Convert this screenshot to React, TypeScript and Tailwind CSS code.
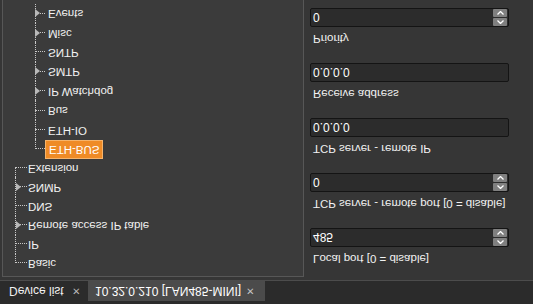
import React from 'react';

type Line = 'first' | 'mid' | 'last' | 'none';

type Node = {
  label: string;
  level: 0 | 1;
  arrow?: boolean;
  selected?: boolean;
  l0: Line;
  l1: Line;
};

const nodes: Node[] = [
  { label: 'Basic', level: 0, l0: 'first', l1: 'none' },
  { label: 'IP', level: 0, l0: 'mid', l1: 'none' },
  { label: 'Remote access IP table', level: 0, arrow: true, l0: 'mid', l1: 'none' },
  { label: 'DNS', level: 0, l0: 'mid', l1: 'none' },
  { label: 'SNMP', level: 0, arrow: true, l0: 'mid', l1: 'none' },
  { label: 'Extension', level: 0, l0: 'last', l1: 'none' },
  { label: 'ETH-BUS', level: 1, selected: true, l0: 'none', l1: 'first' },
  { label: 'ETH-IO', level: 1, l0: 'none', l1: 'mid' },
  { label: 'Bus', level: 1, l0: 'none', l1: 'mid' },
  { label: 'IP Watchdog', level: 1, arrow: true, l0: 'none', l1: 'mid' },
  { label: 'SMTP', level: 1, arrow: true, l0: 'none', l1: 'mid' },
  { label: 'SNTP', level: 1, l0: 'none', l1: 'mid' },
  { label: 'Misc', level: 1, arrow: true, l0: 'none', l1: 'mid' },
  { label: 'Events', level: 1, arrow: true, l0: 'none', l1: 'mid' },
];

const VLine = ({ kind, x }: { kind: Line; x: 'l0' | 'l1' }) => {
  if (kind === 'none') return null;
  const left = x === 'l0' ? 'left-[12px]' : 'left-[32px]';
  const span =
    kind === 'first' ? 'top-1/2 bottom-0' : kind === 'last' ? 'top-0 bottom-1/2' : 'top-0 bottom-0';
  return <span className={`absolute ${left} ${span} border-l border-dotted border-[#c8c8c8]`} />;
};

const Arrow = () => (
  <svg width="5" height="8" viewBox="0 0 5 8" className="absolute top-[6px]">
    <path d="M0 0 L5 4 L0 8 Z" fill="#b9b9b9" />
  </svg>
);

const TreeRow = ({ n }: { n: Node }) => (
  <div className={n.level === 0 ? 'relative h-[19px] flex items-center' : 'relative h-[19.4px] flex items-center'}>
    <VLine kind={n.l0} x="l0" />
    <VLine kind={n.l1} x="l1" />
    {n.level === 0 ? (
      <span className="absolute left-[12px] w-[12px] top-1/2 border-t border-dotted border-[#c8c8c8]" />
    ) : (
      <span className="absolute left-[32px] w-[10px] top-1/2 border-t border-dotted border-[#c8c8c8]" />
    )}
    {n.arrow && (
      <span className={n.level === 0 ? 'absolute left-[13px] top-0' : 'absolute left-[32px] top-0'}>
        <Arrow />
      </span>
    )}
    {n.selected ? (
      <span className="ml-[42px] h-[19px] px-[3px] flex items-center bg-[#ef8b26] border border-[#f6b46b] text-white relative">
        {n.label}
      </span>
    ) : (
      <span className={n.level === 0 ? 'ml-[25px] text-[#f2f2f2]' : 'ml-[45px] text-[#f2f2f2]'}>
        {n.label}
      </span>
    )}
  </div>
);

const Spin = () => (
  <div className="flex flex-col gap-[1px] mr-[1px]">
    <span className="w-[14px] h-[8px] bg-[#808080] rounded-[1px] flex items-center justify-center">
      <svg width="7" height="4" viewBox="0 0 7 4">
        <path d="M0.5 3.5 L3.5 0.5 L6.5 3.5" stroke="#fff" strokeWidth="1.3" fill="none" />
      </svg>
    </span>
    <span className="w-[14px] h-[8px] bg-[#808080] rounded-[1px] flex items-center justify-center">
      <svg width="7" height="4" viewBox="0 0 7 4">
        <path d="M0.5 0.5 L3.5 3.5 L6.5 0.5" stroke="#fff" strokeWidth="1.3" fill="none" />
      </svg>
    </span>
  </div>
);

const Field = ({ label, value, spin }: { label: string; value: string; spin?: boolean }) => (
  <div className="flex flex-col mb-[16px]">
    <div className="h-[16px] leading-[16px] pl-[3px] text-[#f2f2f2]">{label}</div>
    <div className="mt-[4px] w-[199px] h-[19px] rounded-[2px] border border-[#141414] bg-[#2c2c2c] flex items-center justify-between pl-[2px]">
      <span className="text-white text-[12px]">{value}</span>
      {spin && <Spin />}
    </div>
  </div>
);

const App = () => {
  return (
    <div className="w-[533px] h-[304px] overflow-hidden -scale-y-100 bg-[#363636] flex flex-col font-['Liberation_Sans',Arial,sans-serif] text-[11.5px]">
      <div className="h-[24px] shrink-0 bg-[#2b2b2b] border-b border-[#4c4c4c] flex items-end">
        <div className="w-[88px] h-[20px] flex items-center justify-between pl-[9px] pr-[8px] text-[#f2f2f2] text-[12px]">
          <span>Device list</span>
          <span className="text-[#bdbdbd] text-[13px]">×</span>
        </div>
        <div className="w-[177px] h-[20px] bg-[#4b4b4b] flex items-center justify-between pl-[7px] pr-[11px] text-white text-[12px]">
          <span>10.32.0.210 [LAN485-MINI]</span>
          <span className="text-[#c8c8c8] text-[13px]">×</span>
        </div>
      </div>
      <div className="flex flex-1 min-h-0">
        <div className="ml-[2px] mt-[3px] w-[302px] border border-b-0 border-[#575757] bg-[#3b3b3b] overflow-hidden pt-[3px]">
          {nodes.map((n) => (
            <TreeRow key={n.label} n={n} />
          ))}
        </div>
        <div className="flex flex-col pl-[6px] pt-[13px]">
          <Field label="Local port [0 = disable]" value="485" spin />
          <Field label="TCP server - remote port [0 = disable]" value="0" spin />
          <Field label="TCP server - remote IP" value="0.0.0.0" />
          <Field label="Receive address" value="0.0.0.0" />
          <Field label="Priority" value="0" spin />
        </div>
      </div>
    </div>
  );
};

export default App;
